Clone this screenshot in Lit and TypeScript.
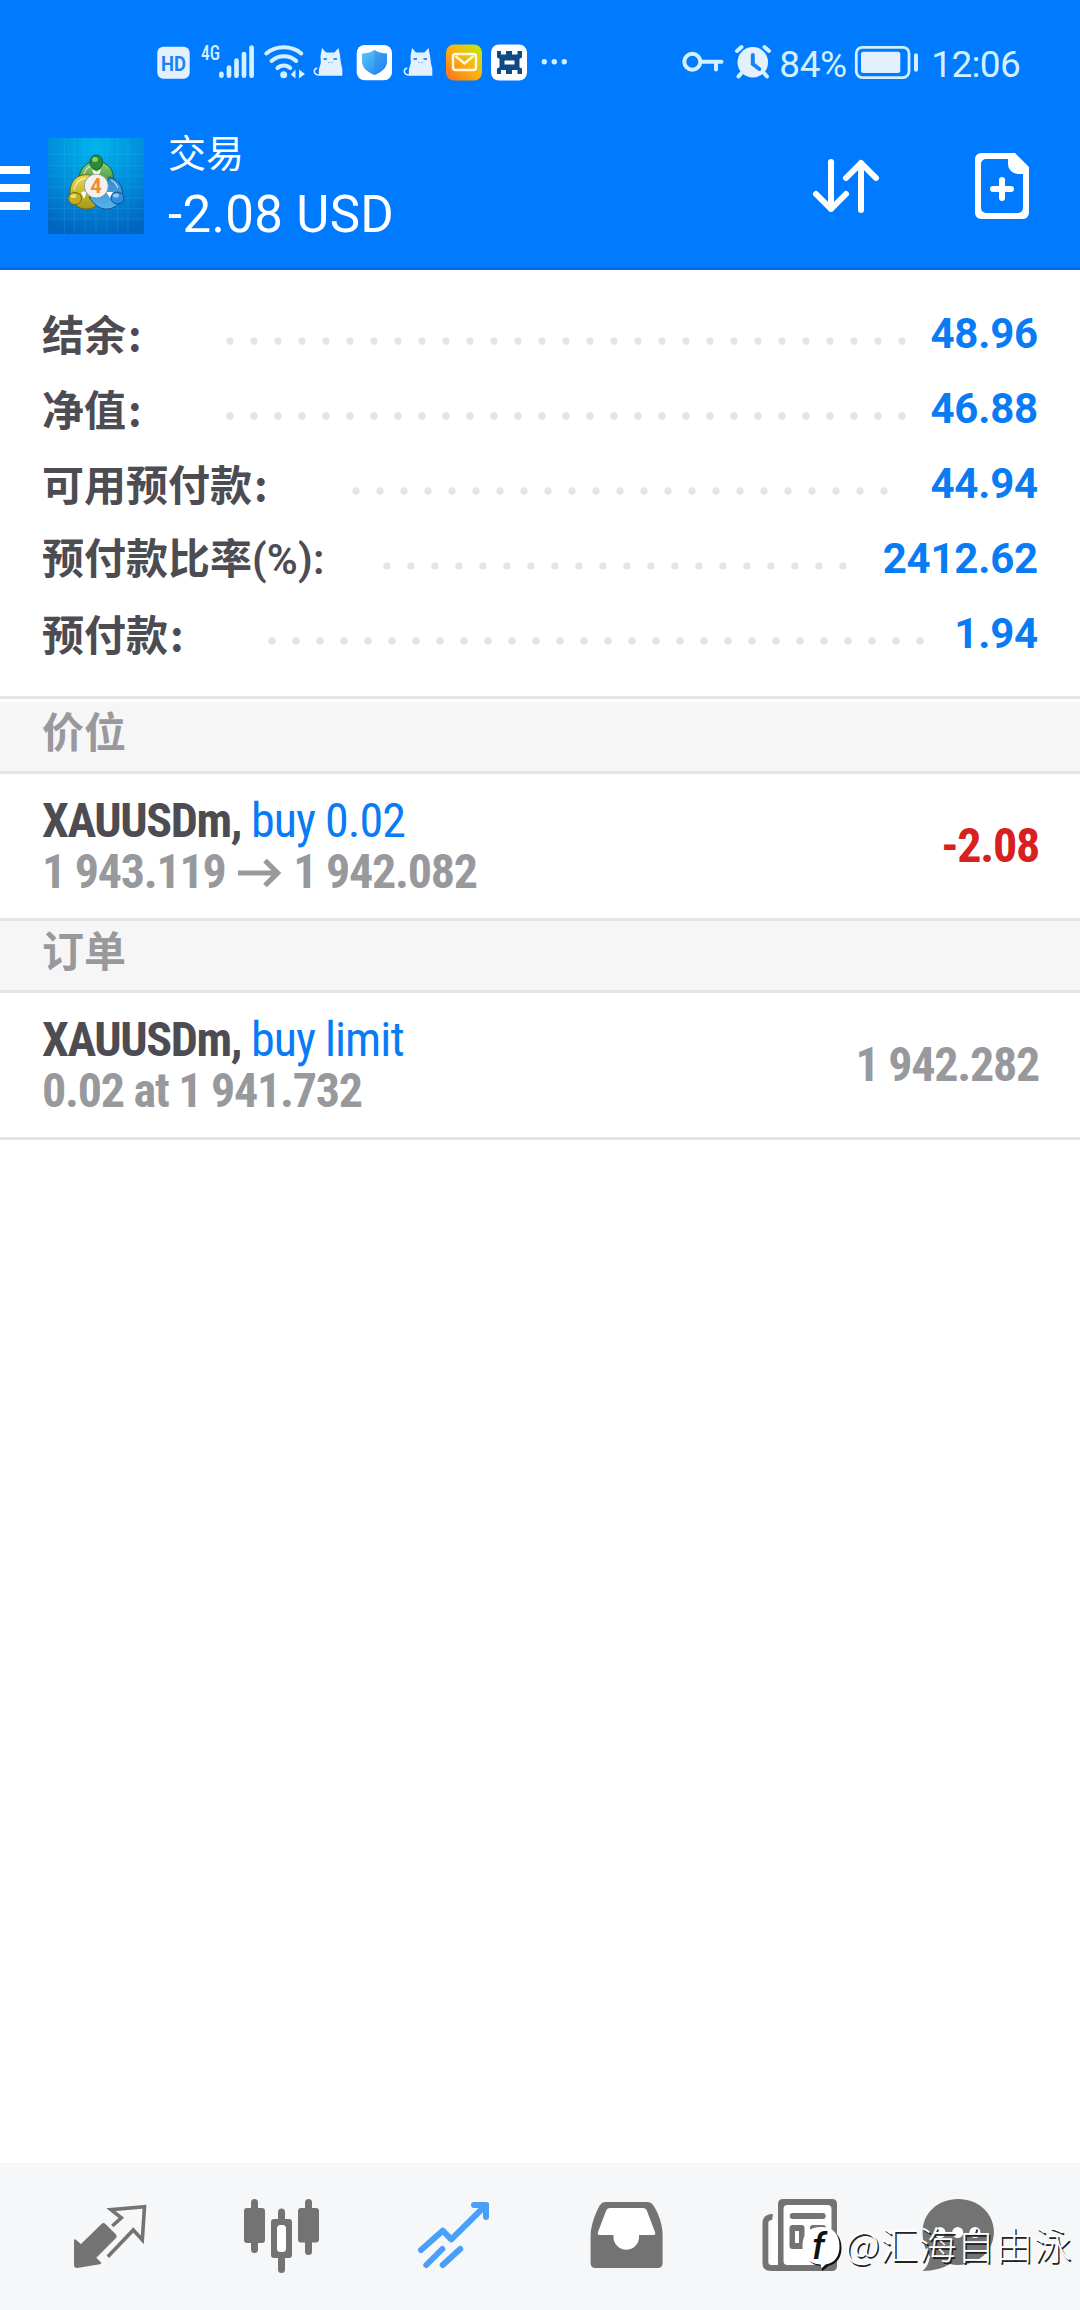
import {LitElement, css, html, svg} from 'lit';
import {customElement, property} from 'lit/decorators.js';

const DOT_STEP = 24;

// small cat silhouette, it is shown twice in the status bar
const cat = html`
  <svg width="44" height="40" viewBox="0 0 44 40">
    <path
      d="M10.500 32.500c-4 1-6.500-1-6.200-3.500.2-1.800 1.500-3 3-2.500"
      fill="none"
      stroke="#dff0ff"
      stroke-width="1.600"
    />
    <path
      d="M8.700 33.700 9 27l1.800-6-.3-7L12 6l4 4.500h8.500L28.500 6l1.500 7.500 1 8 1.300 5.500v6.700z"
      fill="#e3f1ff"
    />
    <path
      d="M13.500 17h3.500M23.500 17h3.500"
      stroke="#3c8fef"
      stroke-width="2"
      fill="none"
    />
    <path d="M18.500 20.500h1M21.500 20.500h1" stroke="#3c8fef" stroke-width="1" />
  </svg>
`;

@customElement('status-bar')
export class StatusBar extends LitElement {
  static override styles = css`
    :host {
      display: flex;
      justify-content: space-between;
      height: 40px;
      padding: 42px 60px 0 156px;
      color: #d2f0ff;
      font-family: Roboto, sans-serif;
      font-size: 37px;
      line-height: 46px;
    }
    .group {
      display: flex;
    }
    svg {
      display: block;
      flex: none;
    }
    .percent {
      width: 73px;
      margin-left: 5px;
      letter-spacing: -0.5px;
      white-space: nowrap;
    }
    .time {
      margin-left: 10px;
      letter-spacing: -0.7px;
    }
    .hd {
      font: 700 21px Roboto, sans-serif;
    }
    .net {
      font: 500 20px 'Roboto Condensed', Roboto, sans-serif;
    }
  `;

  override render() {
    return html`
      <div class="group">
        <svg width="44" height="40" viewBox="0 0 44 40">
          <rect x="1.300" y="4.700" width="32.400" height="32" rx="6" fill="#e3f1ff" />
          <text class="hd" x="5" y="28.500" textLength="25" lengthAdjust="spacingAndGlyphs" fill="#1b82f5">HD</text>
        </svg>
        <svg width="62" height="40" viewBox="0 0 62 40">
          <text class="net" x="1" y="18" textLength="19" lengthAdjust="spacingAndGlyphs" fill="#d2f0ff">4G</text>
          <path
            d="M21.400 31.800v1.900M29 25.500v8.200M36.500 18.500v15.200M44 12v21.700M51.600 5.500v28.200"
            stroke="#d2f0ff"
            stroke-width="4.700"
            stroke-linecap="round"
          />
        </svg>
        <svg width="48" height="40" viewBox="0 0 48 40">
          <g fill="none" stroke="#d2f0ff" stroke-width="4" stroke-linecap="round">
            <path d="M4.300 11.500c9.500-8.200 25.500-8.200 35 0" />
            <path d="M9.500 19c7-6.500 18-6.500 24.700 0" />
            <path d="M15.500 26c3.500-3.500 9.200-3.500 12.700 0" />
          </g>
          <circle cx="21.700" cy="32.700" r="3.500" fill="#d2f0ff" />
          <path d="M28.700 32.500 33.500 27.500v9zM37 27.500 43 32 37 36.500zM34.800 28v8" fill="#d2f0ff" />
        </svg>
        ${cat}
        <svg width="46" height="40" viewBox="0 0 46 40">
          <defs>
            <linearGradient id="shield" x1="0" y1="0" x2="1" y2="1">
              <stop offset="0" stop-color="#5cc6fb" />
              <stop offset="1" stop-color="#1e80ee" />
            </linearGradient>
          </defs>
          <rect x="2.700" y="3" width="35.300" height="35.300" rx="8" fill="#fff" />
          <path
            d="M20.500 8c4 2.700 8 3.500 12.500 3.500v8c0 6.500-6 11-12.500 13.500C14 30.500 8 26 8 19.500v-8c4.500 0 8.500-.8 12.500-3.500z"
            fill="url(#shield)"
          />
          <path d="M20.500 8c4 2.700 8 3.500 12.500 3.500v8c0 6.500-6 11-12.500 13.500z" fill="#2383ee" opacity=".35" />
        </svg>
        ${cat}
        <svg width="44" height="40" viewBox="0 0 44 40">
          <defs>
            <linearGradient id="mail" x1="0" y1="1" x2="1" y2="0">
              <stop offset="0" stop-color="#ff6d1c" />
              <stop offset=".5" stop-color="#fdaf10" />
              <stop offset="1" stop-color="#b9f00c" />
            </linearGradient>
          </defs>
          <rect x="2" y="2.500" width="36" height="36" rx="8" fill="url(#mail)" />
          <rect x="9" y="12" width="23" height="16" rx="2.500" fill="none" stroke="#fffbe0" stroke-width="2.400" />
          <path d="m11.500 14 9 7.500 9-7.500" fill="none" stroke="#fffbe0" stroke-width="2.400" />
        </svg>
        <svg width="44" height="40" viewBox="0 0 44 40">
          <rect x="3" y="2.500" width="36" height="36" rx="8" fill="#fff" />
          <path
            fill-rule="evenodd"
            d="M9 9h4v3.500h5V9h6v3.500h5.500V9H34v6.500l-2.500 1.300v8.400l2.500 1.300V32h-4.500v-4H24v4h-6v-4h-5v4H9v-5.500l2.500-1.300v-8.400L9 15.500zM16.500 18.500v4h10v-4z"
            fill="#104a85"
          />
        </svg>
        <svg width="48" height="40" viewBox="0 0 48 40">
          <g fill="#d2f0ff">
            <circle cx="12.300" cy="19.700" r="2.700" />
            <circle cx="22.300" cy="19.700" r="2.700" />
            <circle cx="32.300" cy="19.700" r="2.700" />
          </g>
        </svg>
      </div>
      <div class="group">
        <svg width="50" height="40" viewBox="0 0 50 40">
          <g fill="none" stroke="#d2f0ff" stroke-width="4" stroke-linecap="round">
            <circle cx="12.300" cy="19.700" r="8" />
            <path d="M21 19.700h20.500M36 20v7.500" />
          </g>
        </svg>
        <svg width="44" height="40" viewBox="0 0 44 40">
          <circle cx="22.800" cy="20.300" r="15.300" fill="#e3f1ff" />
          <path
            d="M7 9 11.500 5M34.500 5l4.500 4M11.500 31l-3 3.500M34 31l3 3.500"
            stroke="#d2f0ff"
            stroke-width="4"
            stroke-linecap="round"
          />
          <path d="M22.800 13v9l6.500 5" fill="none" stroke="#1b82f5" stroke-width="4" stroke-linecap="round" />
        </svg>
        <span class="percent">84%</span>
        <svg width="69" height="40" viewBox="0 0 69 40">
          <rect x="4.300" y="5.300" width="52.700" height="30.300" rx="6" fill="none" stroke="#d2f0ff" stroke-width="2.800" />
          <rect x="9" y="9.700" width="39.300" height="21.300" rx="2.500" fill="#e3f1ff" />
          <rect x="62" y="11.300" width="4" height="18.400" rx="2" fill="#d2f0ff" />
        </svg>
        <span class="time">12:06</span>
      </div>
    `;
  }
}

@customElement('app-header')
export class AppHeader extends LitElement {
  static override styles = css`
    :host {
      display: flex;
      align-items: center;
      height: 162px;
      color: #fff;
    }
    svg {
      display: block;
      flex: none;
    }
    .menu {
      margin-top: 4px;
    }
    .logo {
      margin-left: 18px;
    }
    .four {
      font: 700 20px Roboto, sans-serif;
    }
    .heading {
      flex: 1;
      margin: 3px 0 0 24px;
    }
    .title {
      margin-bottom: 13px;
      font: 38px/42px 'Noto Sans CJK SC', sans-serif;
    }
    .profit {
      font: 51px/60px Roboto, sans-serif;
      letter-spacing: 0.35px;
      white-space: pre;
    }
    .new-order {
      margin: 0 48px 0 90px;
    }
  `;

  override render() {
    return html`
      <svg class="menu" width="30" height="44" viewBox="0 0 30 44">
        <path d="M0 0h30v8H0zM0 18h30v8H0zM0 36h30v8H0z" fill="#fff" />
      </svg>
      <svg class="logo" width="96" height="96" viewBox="0 0 96 96">
        <defs>
          <radialGradient id="sky" cx=".5" cy=".08" r=".95">
            <stop offset="0" stop-color="#00b4ee" />
            <stop offset=".5" stop-color="#0090dc" />
            <stop offset="1" stop-color="#0064c0" />
          </radialGradient>
          <linearGradient id="green" x1="0" y1="0" x2="0" y2="1">
            <stop offset="0" stop-color="#8fd07a" />
            <stop offset="1" stop-color="#27852b" />
          </linearGradient>
          <linearGradient id="yellow" x1="0" y1="0" x2="0" y2="1">
            <stop offset="0" stop-color="#e8dc4c" />
            <stop offset="1" stop-color="#a8961a" />
          </linearGradient>
          <linearGradient id="blue" x1="0" y1="0" x2="0" y2="1">
            <stop offset="0" stop-color="#2f86cc" />
            <stop offset="1" stop-color="#5ab2ea" />
          </linearGradient>
        </defs>
        <rect width="96" height="96" fill="url(#sky)" />
        <path
          d="M16.500 0v96M26.500 0v96M37 0v96M48 0v96M59 0v96M69.500 0v96M80 0v96M0 16.500h96M0 27.500h96M0 38h96M0 49h96M0 60h96M0 70.500h96M0 81h96"
          stroke="#5fd0ff"
          stroke-width=".6"
          opacity=".25"
        />
        <path d="M34 51c-7-12-1-27 14.500-28 15 1 21 15 14 29z" fill="url(#green)" stroke="#145f2c" />
        <path d="M42 37c-10-1.500-20 3-20 18 0 8 7 17 18 16 7-.5 10-5 12-11z" fill="url(#yellow)" stroke="#6b6510" />
        <path d="M61 39c9 2 14 9 13.500 17C74 65 66 72 57 71c-8-1-13-7-16-12l14-2z" fill="url(#blue)" stroke="#10508e" />
        <path d="M36 36c2-7 6-8 9-8M26 52c1-8 7-11 12-12M70 50c-2-5-5-7-7-8" fill="none" stroke="#fff" stroke-width="1.200" opacity=".7" />
        <path d="m44 31 4.500 3 4.500-3-2 6h-5zM33 54l6-1-3 8zM58 54l7 0-3 6z" fill="#fff" />
        <ellipse cx="48.300" cy="24.300" rx="6.300" ry="7.300" fill="#2d8b35" stroke="#145f2c" />
        <ellipse cx="27" cy="60.500" rx="6.500" ry="6" fill="#c2ae22" stroke="#756b10" />
        <ellipse cx="69.500" cy="60" rx="6.500" ry="6" fill="#2f8fdc" stroke="#10508e" />
        <ellipse cx="47" cy="21.500" rx="3" ry="2.500" fill="#9bdc8c" opacity=".8" />
        <ellipse cx="25.500" cy="58" rx="3" ry="2" fill="#f7ec7c" opacity=".8" />
        <ellipse cx="68" cy="57.500" rx="3" ry="2" fill="#a6dcff" opacity=".8" />
        <circle cx="48.300" cy="48" r="12" fill="#f1f1f3" stroke="#7c8a7a" stroke-width=".8" />
        <text class="four" x="48" y="55" text-anchor="middle" fill="#f58a2c">4</text>
      </svg>
      <div class="heading">
        <div class="title">交易</div>
        <div class="profit">-2.08 USD</div>
      </div>
      <svg width="72" height="60" viewBox="0 0 72 60">
        <path
          d="M21 6v47M6 38l15 15 15-15M51 54V7M36 22 51 7l15 15"
          fill="none"
          stroke="#fff"
          stroke-width="6"
          stroke-linecap="round"
          stroke-linejoin="round"
        />
      </svg>
      <svg class="new-order" width="60" height="72" viewBox="0 0 60 72">
        <path
          fill-rule="evenodd"
          d="M9 3h34l14 14v46a6 6 0 0 1-6 6H9a6 6 0 0 1-6-6V9a6 6 0 0 1 6-6zM14 9a5 5 0 0 0-5 5v44a5 5 0 0 0 5 5h32a5 5 0 0 0 5-5V24h-5A10 10 0 0 1 36 14V9z"
          fill="#fff"
        />
        <path d="M21 39h18M30 30v18" stroke="#fff" stroke-width="6" stroke-linecap="round" />
      </svg>
    `;
  }
}

@customElement('account-row')
export class AccountRow extends LitElement {
  static override styles = css`
    :host {
      display: flex;
      align-items: center;
      height: 75px;
      padding: 0 42px;
      font-size: 42px;
      line-height: 60px;
    }
    .label {
      flex: none;
      margin-top: -2px;
      color: #4d4c52;
      font-family: 'Noto Sans CJK SC', sans-serif;
      font-weight: 700;
      white-space: nowrap;
    }
    .colon {
      margin-left: 2px;
    }
    .unit {
      font-family: Roboto, sans-serif;
      font-weight: 600;
      letter-spacing: 0.2px;
    }
    .dots {
      flex: none;
      height: 8px;
      margin-top: 15px;
      background: radial-gradient(circle, #e4e4e4 3.3px, transparent 4.1px) 0 0 / 24px 8px repeat-x;
    }
    .value {
      flex: 1;
      color: #087bf5;
      font-family: Roboto, sans-serif;
      font-weight: 700;
      letter-spacing: -0.2px;
      text-align: right;
    }
  `;

  @property() label = '';

  @property() unit = '';

  @property() value = '';

  // left edge of the dotted leader, counted from the label's own edge
  @property({type: Number}) offset = 0;

  @property({type: Number}) dots = 0;

  override render() {
    return html`
      <div class="label" style="width: ${this.offset}px">
        ${this.label}${this.unit
          ? html`<span class="unit">${this.unit}:</span>`
          : html`<span class="colon">:</span>`}
      </div>
      <div class="dots" style="width: ${this.dots * DOT_STEP}px"></div>
      <div class="value">${this.value}</div>
    `;
  }
}

@customElement('trade-row')
export class TradeRow extends LitElement {
  static override styles = css`
    :host {
      display: flex;
      align-items: center;
      justify-content: space-between;
      height: 144px;
      padding: 0 42px;
      border-bottom: 3px solid #e4e4e4;
      font: 700 48px/51px 'Roboto Condensed', Roboto, sans-serif;
      font-stretch: condensed;
      letter-spacing: -1.25px;
      color: #98999d;
      white-space: nowrap;
    }
    .symbol {
      color: #4d4c52;
      letter-spacing: -1.4px;
    }
    .side {
      color: #087bf5;
      font-weight: 400;
      letter-spacing: -0.95px;
    }
    .value {
      margin: 0 -1px 2px 0;
    }
    .loss {
      color: #d92020;
    }
    .arrow {
      margin: 0 2px 0 3px;
    }
  `;

  @property() symbol = '';

  @property() side = '';

  @property() detail = '';

  @property() target = '';

  @property() value = '';

  @property({type: Boolean}) loss = false;

  override render() {
    return html`
      <div>
        <div><span class="symbol">${this.symbol},</span> <span class="side">${this.side}</span></div>
        <div>
          ${this.detail}
          ${this.target
            ? html`<svg class="arrow" width="43" height="30" viewBox="0 0 43 30">
                  <path d="M0 15h38M27 2.500 39.500 15 27 27.500" fill="none" stroke="#98999d" stroke-width="5.200" />
                </svg>
                ${this.target}`
            : ''}
        </div>
      </div>
      <div class="value ${this.loss ? 'loss' : ''}">${this.value}</div>
    `;
  }
}

// bottom tabs: quotes, chart, trade, history, news, messages
const tabs = [
  svg`
    <path d="M24 50.500q0-2 1.500-1l5.500 4.500 20.500-20q2-2 4 0L66 44.500q1.500 2 0 3.500L46.300 67.700l5 5q0 1-1.500 1.500L27 78q-3 0-3-3z" fill="#737373" />
    <path d="m62.300 36 9-8.200L61 19.700l33.500-2.900L92.300 50l-9-10-25.500 26.700" fill="none" stroke="#737373" stroke-width="3.600" />
  `,
  svg`
    <g fill="#737373">
      <rect x="22" y="18" width="21" height="35" rx="3" />
      <rect x="29" y="9" width="7" height="54" rx="3.500" />
      <path fill-rule="evenodd" d="M52 29h15a3 3 0 0 1 3 3v33a3 3 0 0 1-3 3H52a3 3 0 0 1-3-3V32a3 3 0 0 1 3-3zM59 35a4 4 0 0 0-4 4v19a4 4 0 0 0 4 4h1a4 4 0 0 0 4-4V39a4 4 0 0 0-4-4z" />
      <path d="M56 31v-9a3.500 3.500 0 0 1 7 0v9zM56 66v13.500a3.500 3.500 0 0 0 7 0V66z" />
      <rect x="76" y="18" width="21" height="34.500" rx="3" />
      <rect x="83" y="9" width="7" height="56" rx="3.500" />
    </g>
    <rect x="55" y="35" width="9" height="27" rx="4" fill="#fff" />
  `,
  svg`
    <g fill="none" stroke="#4a9ff8" stroke-width="6" stroke-linecap="round" stroke-linejoin="round">
      <path d="m27 60 21.700-19.300 8.600 8.600L91 16M80 15h12v12" />
      <path d="m32.300 75 16-16M48.700 75l17.500-16" />
    </g>
    <path d="M82 13h13v13z" fill="#4a9ff8" />
  `,
  svg`
    <path d="M44 18h33q3 0 4 3l8 21q1 3-1.500 3H73v2a12.700 12.700 0 0 1-25.500 0v-2h-14q-2.500 0-1.500-3l8-21q1-3 4-3z" fill="#fff" />
    <path fill-rule="evenodd" fill="#737373"
      d="M24.600 45C25 34 30 22 34 15q2-3 5-3h42q4 0 6 3c5 7 9.600 19 9.600 30v28q0 5-5 5h-62q-5 0-5-5zM47.500 45h-14q-2.500 0-1.500-3l8-21q1-3 4-3h33q3 0 4 3l8 21q1 3-1.500 3H73v2a12.700 12.700 0 0 1-25.500 0z" />
  `,
  svg`
    <path d="M33 30h6v45h-6zM46 15h48v60H46z" fill="#fff" />
    <path fill-rule="evenodd" fill="#737373"
      d="M45 9h49q5 0 5 5v62q0 5-5 5H33q-8.500 0-8.500-8V33q0-9 10.500-9l-1 6q-3.700 0-3.700 3v39q0 3 3 3H40V14q0-5 5-5zM49.500 15q-4 0-4 4v52q0 4 4 4h40q4 0 4-4V19q0-4-4-4zM54.500 35h9q3 0 3 3v18q0 3-3 3h-9q-3 0-3-3V38q0-3 3-3zM57 41v12h4V41z" />
    <path d="M54.700 26h30M75 38h10" stroke="#737373" stroke-width="6" stroke-linecap="round" />
  `,
  svg`
    <path d="M48.200 9c20 0 35.700 14 35.700 33S68 75 48.200 75q-4.500 0-8.400-1-11 7-27.200 7 6-5 7.400-14.500C15 60 12.600 52 12.600 42 12.600 23 28 9 48.200 9z" fill="#737373" />
    <g fill="#fff"><circle cx="30" cy="42.500" r="5.500" /><circle cx="47.700" cy="42.500" r="5.500" /><circle cx="65" cy="42.500" r="5.500" /></g>
  `,
];

@customElement('tab-bar')
export class TabBar extends LitElement {
  static override styles = css`
    :host {
      display: grid;
      grid-template-columns: repeat(6, 172px);
      justify-items: center;
      height: 120px;
      padding: 27px 24px 0;
      background: #f6f7f8;
    }
    svg {
      display: block;
    }
  `;

  override render() {
    return tabs.map(
      (tab) => html`<svg width="120" height="90" viewBox="0 0 120 90">${tab}</svg>`
    );
  }
}

@customElement('app-root')
export class AppRoot extends LitElement {
  static override styles = css`
    :host {
      position: relative;
      display: flex;
      flex-direction: column;
      width: 1080px;
      height: 2310px;
      overflow: hidden;
      background: #fff;
    }
    .top {
      border-bottom: 3px solid #006ee2;
      background: #007aff;
    }
    app-header {
      margin-top: 23px;
    }
    .account {
      padding: 26px 0 25px;
      border-bottom: 3px solid #e4e4e4;
      margin-bottom: 3px;
    }
    .section {
      box-sizing: border-box;
      height: 72px;
      padding: 0 42px 12px;
      border-bottom: 3px solid #e4e4e4;
      background: #f6f6f6;
      color: #98999d;
      font: 700 42px/55px 'Noto Sans CJK SC', sans-serif;
    }
    tab-bar {
      margin-top: auto;
    }
    .watermark {
      position: absolute;
      right: 8px;
      bottom: 38px;
      display: flex;
      align-items: center;
      gap: 3px;
      color: #fff;
      font: 300 38px/56px 'Noto Sans CJK SC', sans-serif;
      letter-spacing: 0.4px;
      text-shadow: 1.5px 1.5px 0 #222;
    }
    .badge {
      margin-top: 12px;
    }
    .glyph {
      font: italic 500 37px Roboto, sans-serif;
      text-shadow: none;
    }
  `;

  override render() {
    return html`
      <div class="top">
        <status-bar></status-bar>
        <app-header></app-header>
      </div>
      <div class="account">
        <account-row label="结余" value="48.96" offset="176" dots="29"></account-row>
        <account-row label="净值" value="46.88" offset="176" dots="29"></account-row>
        <account-row label="可用预付款" value="44.94" offset="302" dots="23"></account-row>
        <account-row label="预付款比率" unit="(%)" value="2412.62" offset="333" dots="20"></account-row>
        <account-row label="预付款" value="1.94" offset="218" dots="28"></account-row>
      </div>
      <div class="section">价位</div>
      <trade-row
        symbol="XAUUSDm"
        side="buy 0.02"
        detail="1 943.119"
        target="1 942.082"
        value="-2.08"
        loss
      ></trade-row>
      <div class="section">订单</div>
      <trade-row
        symbol="XAUUSDm"
        side="buy limit"
        detail="0.02 at 1 941.732"
        value="1 942.282"
      ></trade-row>
      <tab-bar></tab-bar>
      <div class="watermark">
        <svg class="badge" width="40" height="46" viewBox="0 0 40 46">
          <path d="M20.500 3C33 3 39.500 10 39.500 22c0 10-5 16-13 18l-6 5-2-5C8 39 3.500 32 3.500 22 3.500 10 9 3 20.500 3z" fill="#111" />
          <path d="M19 1c12 0 18.500 7 18.500 19 0 11-5 17-14 18.500l-4 4-1-4C7 38 .5 31 .5 20 .5 8 7 1 19 1z" fill="#fff" />
          <text class="glyph" x="10" y="33" fill="#111">f</text>
        </svg>
        <span>@汇海自由泳</span>
      </div>
    `;
  }
}

declare global {
  interface HTMLElementTagNameMap {
    'app-root': AppRoot;
    'app-header': AppHeader;
    'status-bar': StatusBar;
    'account-row': AccountRow;
    'trade-row': TradeRow;
    'tab-bar': TabBar;
  }
}
